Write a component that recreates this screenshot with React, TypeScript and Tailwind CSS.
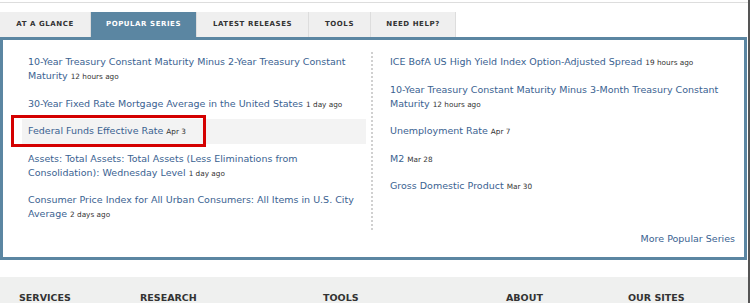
import React from "react";

type Item = { title: string; when: string; highlight?: boolean };

const leftItems: Item[] = [
  { title: "10-Year Treasury Constant Maturity Minus 2-Year Treasury Constant Maturity", when: "12 hours ago" },
  { title: "30-Year Fixed Rate Mortgage Average in the United States", when: "1 day ago" },
  { title: "Federal Funds Effective Rate", when: "Apr 3", highlight: true },
  { title: "Assets: Total Assets: Total Assets (Less Eliminations from Consolidation): Wednesday Level", when: "1 day ago" },
  { title: "Consumer Price Index for All Urban Consumers: All Items in U.S. City Average", when: "2 days ago" },
];

const rightItems: Item[] = [
  { title: "ICE BofA US High Yield Index Option-Adjusted Spread", when: "19 hours ago" },
  { title: "10-Year Treasury Constant Maturity Minus 3-Month Treasury Constant Maturity", when: "12 hours ago" },
  { title: "Unemployment Rate", when: "Apr 7" },
  { title: "M2", when: "Mar 28" },
  { title: "Gross Domestic Product", when: "Mar 30" },
];

const tabs = [
  { label: "AT A GLANCE", w: "w-[91px]" },
  { label: "POPULAR SERIES", w: "w-[106px]", active: true },
  { label: "LATEST RELEASES", w: "w-[112px]" },
  { label: "TOOLS", w: "w-[62px]" },
  { label: "NEED HELP?", w: "w-[85px]" },
];

function SeriesRow({ item }: { item: Item }) {
  return (
    <li className={`relative px-[6px] py-[5.5px] text-[9.5px] leading-[14px] ${item.highlight ? "bg-[#f3f3f3]" : ""}`}>
      {item.highlight && (
        <span className="pointer-events-none absolute left-[-11px] top-[-4px] h-[32px] w-[195px] border-[3px] border-[#d40000]" />
      )}
      <a href="#" className="text-[#3a6291]">
        {item.title}
      </a>{" "}
      <span className="text-[7.3px] leading-none text-[#333]">{item.when}</span>
    </li>
  );
}

export default function App() {
  return (
    <div className="h-[303px] w-[750px] overflow-hidden bg-white font-['DejaVu_Sans',Verdana,sans-serif]">
      <div className="h-full border-r-2 border-[#555]">
        <div className="h-[3px] border-b border-[#ddd]" />
        <div className="flex pt-[9px]">
          {tabs.map((t) => (
            <div
              key={t.label}
              className={`${t.w} flex h-[25px] items-center justify-center border-r border-[#ddd] text-[7px] font-bold tracking-[0.08em] ${
                t.active ? "bg-[#5b86a2] text-white" : "bg-[#efefef] text-[#333]"
              }`}
            >
              {t.label}
            </div>
          ))}
        </div>
        <div className="mr-[1px] flex h-[223px] flex-col border-[3px] border-[#5b86a2] pl-[19px] pr-[9px] pt-[9.5px] pb-[11px]">
          <div className="flex flex-1">
            <ul className="flex w-[344px] flex-col gap-[2.5px] self-start">
              {leftItems.map((it) => (
                <SeriesRow key={it.title} item={it} />
              ))}
            </ul>
            <div className="ml-[5px] mt-[2px] h-[178px] border-l-2 border-dotted border-[#d0d0d0]" />
            <ul className="flex flex-1 flex-col gap-[2.5px] self-start pl-[11px]">
              {rightItems.map((it) => (
                <SeriesRow key={it.title} item={it} />
              ))}
            </ul>
          </div>
          <div className="text-right text-[9.5px] leading-[14.5px]">
            <a href="#" className="text-[#3a6291]">
              More Popular Series
            </a>
          </div>
        </div>
        <div className="h-[17px]" />
        <div className="flex h-[30px] bg-[#eff0ef] pt-[14px] text-[9.5px] font-bold leading-[14px] text-[#333]">
          <div className="w-[140px] pl-[19px]">SERVICES</div>
          <div className="w-[183px]">RESEARCH</div>
          <div className="w-[183px]">TOOLS</div>
          <div className="w-[122px]">ABOUT</div>
          <div>OUR SITES</div>
        </div>
      </div>
    </div>
  );
}
